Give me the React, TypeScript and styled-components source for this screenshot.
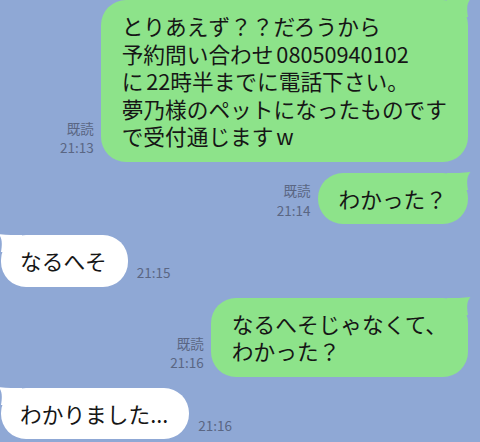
import styled, { createGlobalStyle } from "styled-components";

type Message = {
  out: boolean;
  text: string;
  time: string;
  read?: boolean;
};

const messages: Message[] = [
  {
    out: true,
    text: "とりあえず？？だろうから\n予約問い合わせ 08050940102\nに 22時半までに電話下さい。\n夢乃様のペットになったものです\nで受付通じます w",
    time: "21:13",
    read: true,
  },
  { out: true, text: "わかった？", time: "21:14", read: true },
  { out: false, text: "なるへそ", time: "21:15" },
  { out: true, text: "なるへそじゃなくて、\nわかった？", time: "21:16", read: true },
  { out: false, text: "わかりました...", time: "21:16" },
];

const GlobalStyle = createGlobalStyle`
  html, body {
    margin: 0;
    padding: 0;
    background: #8fa8d5;
  }
  body {
    font-family: "Noto Sans CJK JP", "Noto Sans", sans-serif;
  }
`;

const Tail = ({ out }: { out: boolean }) => (
  <TailSvg $out={out} width="24" height="18" viewBox="0 0 24 18">
    <path d="M0 1 C8 1 16 1 23.5 0 C20 4 19.5 9 21 18 L0 18 Z" />
  </TailSvg>
);

const App = () => {
  return (
    <>
      <GlobalStyle />
      <Chat>
        {messages.map((m, i) => (
          <Row key={i} $out={m.out}>
            {m.out && (
              <Meta $out>
                {m.read && <span>既読</span>}
                <span>{m.time}</span>
              </Meta>
            )}
            <Bubble $out={m.out}>
              <Tail out={m.out} />
              <BubbleText>{m.text}</BubbleText>
            </Bubble>
            {!m.out && (
              <Meta $out={false}>
                <span>{m.time}</span>
              </Meta>
            )}
          </Row>
        ))}
      </Chat>
    </>
  );
};

const Chat = styled.div`
  display: flex;
  flex-direction: column;
  gap: 11px;
  width: 480px;
  height: 442px;
  box-sizing: border-box;
  padding: 0 12px 0 1px;
  overflow: hidden;
  background: #8fa8d5;
`;

const Row = styled.div<{ $out: boolean }>`
  display: flex;
  align-items: flex-end;
  justify-content: ${(p) => (p.$out ? "flex-end" : "flex-start")};
  gap: ${(p) => (p.$out ? "7px" : "9px")};
`;

const Meta = styled.div<{ $out: boolean }>`
  display: flex;
  flex-direction: column;
  align-items: ${(p) => (p.$out ? "flex-end" : "flex-start")};
  margin-bottom: 4px;
  font-size: 13.5px;
  line-height: 19.5px;
  color: #5a6683;
`;

const Bubble = styled.div<{ $out: boolean }>`
  position: relative;
  background: ${(p) => (p.$out ? "#8de38a" : "#ffffff")};
  fill: ${(p) => (p.$out ? "#8de38a" : "#ffffff")};
  border-radius: 25px;
  padding: ${(p) => (p.$out ? "12px 21px 12px 21px" : "12px 21px 12px 19px")};
`;

const BubbleText = styled.div`
  position: relative;
  font-size: 21.7px;
  line-height: 27.5px;
  color: #161616;
  white-space: pre;
  word-spacing: -2px;
`;

const TailSvg = styled.svg<{ $out: boolean }>`
  position: absolute;
  top: -1px;
  ${(p) => (p.$out ? "right: -3px;" : "left: -3px; transform: scaleX(-1);")}
`;

export default App;
